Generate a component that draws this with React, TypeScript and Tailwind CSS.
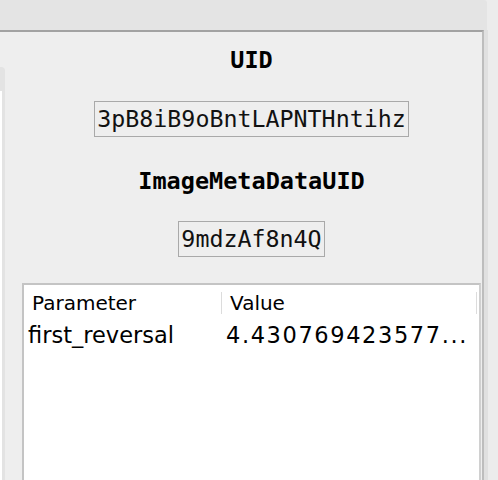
const mono = "font-['DejaVu_Sans_Mono',monospace]";
const sans = "font-['DejaVu_Sans',sans-serif]";

function Label({ children }: { children: string }) {
  return <div className={`${mono} font-bold text-[23.5px] leading-[28px] text-black`}>{children}</div>;
}

function ValueBox({ children }: { children: string }) {
  return (
    <div className={`${mono} text-[23.3px] leading-[34px] text-[#111] border border-[#a9a9a9] px-[2px]`}>
      {children}
    </div>
  );
}

export default function App() {
  return (
    <div className="w-[498px] h-[480px] bg-[#ececec] flex flex-col overflow-hidden">
      <div className="h-[30px] w-[487px] shrink-0 bg-[#e4e4e4] rounded-tr-[3px]" />
      <div className="flex flex-1 min-h-0">
        <div className="w-[484px] shrink-0 flex bg-[#eeeeee] border-t-2 border-r-2 border-t-[#a2a2a2] border-r-[#bdbdbd]">
          {/* cut-off sidebar on the left */}
          <div className="w-[5px] mt-[35px] shrink-0 bg-[#e3e3e3] rounded-tr-[4px] pt-[24px] pr-[3px]">
            <div className="h-full bg-white" />
          </div>
          <div className="flex-1 flex flex-col items-center ml-[17px] mr-[1px] min-w-0">
            <div className="mt-[14px]">
              <Label>UID</Label>
            </div>
            <div className="mt-[27px]">
              <ValueBox>3pB8iB9oBntLAPNTHntihz</ValueBox>
            </div>
            <div className="mt-[30px]">
              <Label>ImageMetaDataUID</Label>
            </div>
            <div className="mt-[26px]">
              <ValueBox>9mdzAf8n4Q</ValueBox>
            </div>
            <div className="mt-[26px] self-stretch flex-1 bg-white border-2 border-b-0 border-[#c4c4c4] border-r-[#d0d0d0]">
              <div className={`${sans} flex h-[34px] pt-[2px] items-center text-[20px] text-black`}>
                <div className="w-[197px] pl-[8px]">Parameter</div>
                <div className="w-px h-[22px] bg-[#dcdcdc]" />
                <div className="flex-1 pl-[8px]">Value</div>
                <div className="w-px h-[22px] bg-[#dcdcdc] mr-[2px]" />
              </div>
              <div className={`${sans} flex h-[34px] items-center text-[22.5px] text-black`}>
                <div className="w-[198px] pl-[4px]">first_reversal</div>
                <div className="flex-1 pl-[4px] whitespace-nowrap tracking-[1.6px]">4.430769423577...</div>
              </div>
            </div>
          </div>
        </div>
        <div className="w-[4px] shrink-0 bg-[#e0e0e0]" />
      </div>
    </div>
  );
}
